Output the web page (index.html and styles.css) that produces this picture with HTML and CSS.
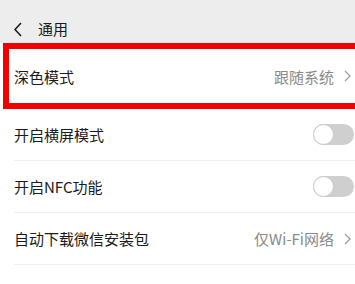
FILE: index.html
```html
<!DOCTYPE html>
<html lang="zh-CN">
<head>
    <meta charset="UTF-8">
    <meta name="viewport" content="width=device-width, initial-scale=1.0">
    <title>通用</title>
    <link rel="stylesheet" href="styles.css">
</head>
<body>
    <div id="page">
        <div class="topbar">
            <svg class="back" width="8" height="15" viewBox="0 0 8 15">
                <polyline points="7,1 1,7.5 7,14" fill="none" stroke="#1a1a1a" stroke-width="1.6"/>
            </svg>
            <span class="title">通用</span>
        </div>
        <div class="list">
            <div class="row row-marked">
                <span class="label">深色模式</span>
                <span class="value">跟随系统</span>
                <span class="arrow">
                    <svg width="7" height="12" viewBox="0 0 7 12"><polyline points="1,1 6,6 1,11" fill="none" stroke="#9a9a9a" stroke-width="1.2"/></svg>
                </span>
            </div>
            <div class="row">
                <span class="label">开启横屏模式</span>
                <span class="switch"><span class="knob"></span></span>
            </div>
            <div class="row">
                <span class="label">开启NFC功能</span>
                <span class="switch"><span class="knob"></span></span>
            </div>
            <div class="row">
                <span class="label">自动下载微信安装包</span>
                <span class="value">仅Wi-Fi网络</span>
                <span class="arrow">
                    <svg width="7" height="12" viewBox="0 0 7 12"><polyline points="1,1 6,6 1,11" fill="none" stroke="#9a9a9a" stroke-width="1.2"/></svg>
                </span>
            </div>
        </div>
    </div>
</body>
</html>
```

FILE: styles.css
```css
body {
    margin: 0;
    background-color: #fff;
    font-family: "Noto Sans CJK SC", "Noto Sans", sans-serif;
    color: #1a1a1a;
}

#page {
    width: 355px;
    height: 284px;
    overflow: hidden;
}

.topbar {
    height: 43px;
    box-sizing: border-box;
    padding: 14px 0 0 14px;
    background-color: #ededed;
    display: flex;
    align-items: flex-start;
}

.back {
    margin-top: 8px;
}

.title {
    margin-left: 16px;
    font-size: 15px;
    line-height: 29px;
}

.list {
    background-color: #fff;
}

.row {
    height: 52px;
    box-sizing: border-box;
    margin-left: 14px;
    padding-right: 4px;
    border-bottom: 1px solid #eeeeee;
    display: flex;
    align-items: center;
    font-size: 15px;
}

.row-marked {
    height: 66px;
    margin-left: 3px;
    padding-left: 5px;
    border: 6px solid #f50000;
    border-right: none;
}

.label {
    flex: 1;
}

.value {
    color: #8a8a8a;
}

.arrow {
    display: flex;
    margin-left: 10px;
}

.switch {
    width: 41px;
    height: 21px;
    margin-right: -3px;
    border-radius: 11px;
    background-color: #cfcfcf;
    position: relative;
}

.knob {
    position: absolute;
    left: 0;
    top: 0;
    width: 19px;
    height: 19px;
    border-radius: 50%;
    background-color: #fff;
    border: 1px solid #c8c8c8;
}
```
